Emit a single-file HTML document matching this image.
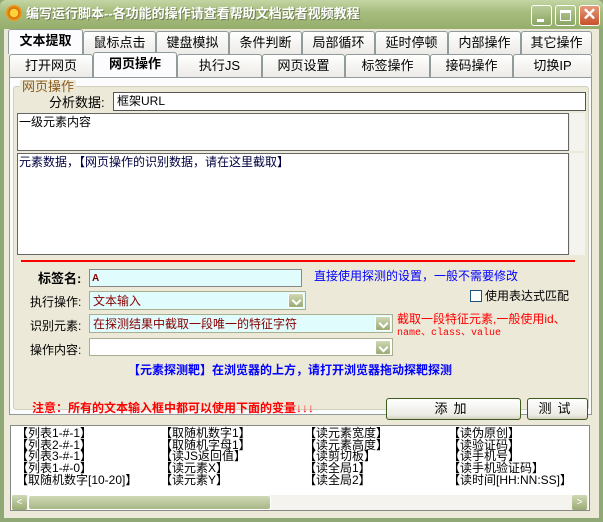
<!DOCTYPE html>
<html><head><meta charset="utf-8"><style>
*{box-sizing:border-box;margin:0;padding:0}
body{width:603px;height:522px;overflow:hidden;background:#8fa876;font-family:"Liberation Sans","Noto Sans CJK SC",sans-serif;font-size:12px;position:relative}
.a{position:absolute}
.title{left:0;top:0;width:603px;height:29px;background:linear-gradient(#c4d5a4,#a7bd7e 40%,#96ae6c);border-radius:6px 6px 0 0}
.client{left:4px;top:29px;width:595px;height:489px;background:#ece9d8}
.tab{position:absolute;height:23px;border:1px solid #919b9c;border-bottom:none;border-radius:3px 3px 0 0;background:linear-gradient(#fff,#ecebe6);text-align:center;font-size:13px;line-height:22px;color:#000}
.sel{background:#fcfcfe;height:25px;font-weight:bold;z-index:2}
.box{position:absolute;background:#fff;border:1px solid #7f9db9}
.t{position:absolute;white-space:nowrap;font-size:12px;line-height:13px}
.sb{position:absolute;width:15px;background:#f4f3ee}
.cb{position:absolute;width:16px;height:15px;right:1px;top:1px;background:linear-gradient(#cfd8b5,#9aab74);border-radius:2px;border:1px solid #fff}
.cb:after{content:"";position:absolute;left:4px;top:3px;width:5px;height:5px;border-right:2px solid #fff;border-bottom:2px solid #fff;transform:rotate(45deg)}
.btn{position:absolute;border:1px solid #3d5a20;border-radius:3px;background:linear-gradient(#fff,#ecebe4 80%,#d6d0c0);text-align:center;font-size:13px;line-height:20px;letter-spacing:6px}
</style></head><body>
<div class="a title"></div>
<div class="a" style="left:6px;top:5px;width:16px;height:16px;border-radius:50%;background:radial-gradient(#ffd23c 35%,#d26c0a 40%,#f2a21c 70%)"></div>
<div class="t" style="left:26px;top:7px;color:#fff;font-size:13px;font-weight:bold;text-shadow:1px 1px 0 #6d7d4f">编写运行脚本--各功能的操作请查看帮助文档或者视频教程</div>
<div class="a" style="left:531px;top:5px;width:21px;height:21px;border:1px solid #fff;border-radius:3px;background:linear-gradient(#b8cd98,#8aa462)"><div class="a" style="left:5px;top:13px;width:7px;height:3px;background:#fff"></div></div>
<div class="a" style="left:555px;top:5px;width:21px;height:21px;border:1px solid #fff;border-radius:3px;background:linear-gradient(#b8cd98,#8aa462)"><div class="a" style="left:4px;top:4px;width:11px;height:11px;border:1px solid #fff;border-top-width:3px"></div></div>
<div class="a" style="left:579px;top:5px;width:21px;height:21px;border:1px solid #fff;border-radius:3px;background:linear-gradient(#e59a7a,#c8502a);color:#fff;font-weight:bold;font-size:17px;line-height:18px;text-align:center">✕</div>
<div class="a client"></div>
<!-- tabs row1 -->
<div class="tab sel" style="left:8px;top:29px;width:75px">文本提取</div>
<div class="tab" style="left:83px;top:31px;width:73px">鼠标点击</div>
<div class="tab" style="left:156px;top:31px;width:73px">键盘模拟</div>
<div class="tab" style="left:229px;top:31px;width:73px">条件判断</div>
<div class="tab" style="left:302px;top:31px;width:73px">局部循环</div>
<div class="tab" style="left:375px;top:31px;width:73px">延时停顿</div>
<div class="tab" style="left:448px;top:31px;width:73px">内部操作</div>
<div class="tab" style="left:521px;top:31px;width:71px">其它操作</div>
<!-- row2 -->
<div class="tab" style="left:9px;top:54px;width:84px">打开网页</div>
<div class="tab sel" style="left:93px;top:52px;width:84px">网页操作</div>
<div class="tab" style="left:177px;top:54px;width:85px">执行JS</div>
<div class="tab" style="left:262px;top:54px;width:83px">网页设置</div>
<div class="tab" style="left:345px;top:54px;width:85px">标签操作</div>
<div class="tab" style="left:430px;top:54px;width:83px">接码操作</div>
<div class="tab" style="left:513px;top:54px;width:79px">切换IP</div>
<div class="a" style="left:9px;top:77px;width:583px;height:338px;background:#fcfcfe;border:1px solid #919b9c"></div>
<div class="a" style="left:13px;top:86px;width:576px;height:324px;background:#ece9d8;border:1px solid #d0d0bf;border-radius:3px"></div>
<div class="t" style="left:20px;top:80px;color:#8b5a1c;background:#ece9d8;padding:0 2px;font-size:13px">网页操作</div>
<div class="t" style="left:49px;top:96px;font-size:13px">分析数据:</div>
<div class="box" style="left:113px;top:92px;width:473px;height:19px;border-color:#555"><div class="t" style="left:3px;top:2px">框架URL</div></div>
<div class="box" style="left:17px;top:113px;width:552px;height:38px;border-color:#666"><div class="t" style="left:1px;top:2px">一级元素内容</div></div>
<div class="sb" style="left:570px;top:113px;height:38px"></div>
<div class="box" style="left:17px;top:153px;width:552px;height:102px;border-color:#666"><div class="t" style="left:1px;top:2px;color:#000040">元素数据，【网页操作的识别数据，请在这里截取】</div></div>
<div class="sb" style="left:570px;top:153px;height:102px"></div>
<div class="a" style="left:21px;top:260px;width:554px;height:2px;background:#f00"></div>
<div class="t" style="left:38px;top:272px;font-size:13px;font-weight:bold">标签名:</div>
<div class="box" style="left:89px;top:269px;width:213px;height:18px;background:#e0fcfc;border-color:#888"><div class="t" style="left:2px;top:2px;color:#800;font-weight:bold;font-size:10px">A</div></div>
<div class="t" style="left:314px;top:270px;color:#00f;font-size:12px">直接使用探测的设置，一般不需要修改</div>
<div class="a" style="left:470px;top:290px;width:12px;height:12px;border:1px solid #1c5180;background:#fff"></div>
<div class="t" style="left:485px;top:290px">使用表达式匹配</div>
<div class="t" style="left:30px;top:296px;font-size:12px">执行操作:</div>
<div class="box" style="left:89px;top:291px;width:217px;height:19px;background:#e0fcfc;border-color:#a8b090"><div class="t" style="left:3px;top:3px;color:#800">文本输入</div><div class="cb"></div></div>
<div class="t" style="left:30px;top:320px">识别元素:</div>
<div class="box" style="left:89px;top:314px;width:304px;height:19px;background:#e0fcfc;border-color:#a8b090"><div class="t" style="left:3px;top:3px;color:#800">在探测结果中截取一段唯一的特征字符</div><div class="cb"></div></div>
<div class="t" style="left:397px;top:313px;color:#f00">截取一段特征元素,一般使用id、</div>
<div class="t" style="left:397px;top:327px;color:#f00;font-size:10px;font-family:'Liberation Mono',monospace">name、class、value</div>
<div class="t" style="left:30px;top:344px">操作内容:</div>
<div class="box" style="left:89px;top:338px;width:304px;height:18px;border-color:#a8b090"><div class="cb"></div></div>
<div class="t" style="left:128px;top:364px;color:#00f;font-weight:bold">【元素探测靶】在浏览器的上方，请打开浏览器拖动探靶探测</div>
<div class="t" style="left:32px;top:402px;color:#f00;font-weight:bold">注意：所有的文本输入框中都可以使用下面的变量↓↓↓</div>
<div class="btn" style="left:386px;top:398px;width:135px;height:22px">添加</div>
<div class="btn" style="left:527px;top:398px;width:61px;height:22px">测试</div>
<div class="box" style="left:10px;top:425px;width:580px;height:86px;border-color:#888">
<div class="t" style="left:5px;top:2px;line-height:11.7px">【列表1-#-1】<br>【列表2-#-1】<br>【列表3-#-1】<br>【列表1-#-0】<br>【取随机数字[10-20]】</div>
<div class="t" style="left:149px;top:2px;line-height:11.7px">【取随机数字1】<br>【取随机字母1】<br>【读JS返回值】<br>【读元素X】<br>【读元素Y】</div>
<div class="t" style="left:293px;top:2px;line-height:11.7px">【读元素宽度】<br>【读元素高度】<br>【读剪切板】<br>【读全局1】<br>【读全局2】</div>
<div class="t" style="left:437px;top:2px;line-height:11.7px">【读伪原创】<br>【读验证码】<br>【读手机号】<br>【读手机验证码】<br>【读时间[HH:NN:SS]】</div>
<div class="a" style="left:1px;top:69px;width:576px;height:15px;background:#f4f3ee"></div>
<div class="a" style="left:1px;top:69px;width:15px;height:15px;background:linear-gradient(#cfd8b5,#9aab74);border-radius:2px;color:#fff;font-size:10px;text-align:center;line-height:15px">&lt;</div>
<div class="a" style="left:17px;top:69px;width:243px;height:15px;background:linear-gradient(#cfd8b5,#a8b888);border-radius:3px;border:1px solid #fff"></div>
<div class="a" style="left:561px;top:69px;width:15px;height:15px;background:linear-gradient(#cfd8b5,#9aab74);border-radius:2px;color:#fff;font-size:10px;text-align:center;line-height:15px">&gt;</div>
</div>
</body></html>
